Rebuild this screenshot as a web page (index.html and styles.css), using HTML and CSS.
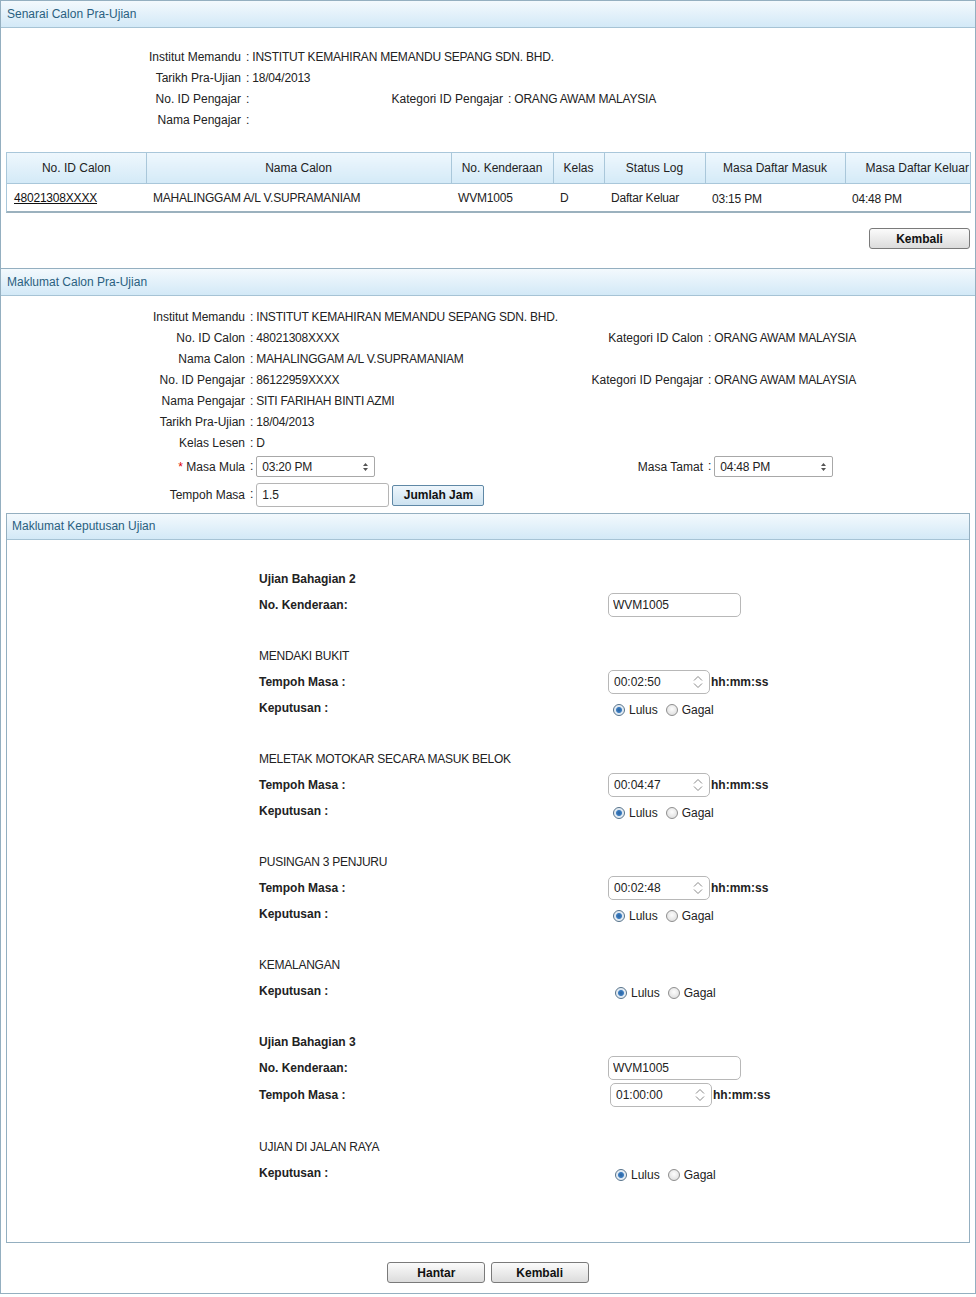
FILE: index.html
```html
<!DOCTYPE html>
<html lang="ms">
<head>
  <meta charset="UTF-8">
  <title>Senarai Calon Pra-Ujian</title>
  <link rel="stylesheet" href="styles.css">
</head>
<body>
  <div class="panel">
    <div class="panel-head">Senarai Calon Pra-Ujian</div>
    <div class="panel-body list-body">
      <div class="info info-top">
        <div class="lbl">Institut Memandu</div>
        <div class="val span3">: INSTITUT KEMAHIRAN MEMANDU SEPANG SDN. BHD.</div>
        <div class="lbl">Tarikh Pra-Ujian</div>
        <div class="val span3">: 18/04/2013</div>
        <div class="lbl">No. ID Pengajar</div>
        <div class="val">:</div>
        <div class="lbl">Kategori ID Pengajar</div>
        <div class="val">: ORANG AWAM MALAYSIA</div>
        <div class="lbl">Nama Pengajar</div>
        <div class="val span3">:</div>
      </div>

      <div class="table-wrap">
        <table class="list">
          <colgroup>
            <col class="w-id"><col class="w-nama"><col class="w-kend"><col class="w-kelas">
            <col class="w-status"><col class="w-masuk"><col class="w-keluar">
          </colgroup>
          <tr>
            <th>No. ID Calon</th>
            <th>Nama Calon</th>
            <th>No. Kenderaan</th>
            <th>Kelas</th>
            <th>Status Log</th>
            <th>Masa Daftar Masuk</th>
            <th>Masa Daftar Keluar</th>
          </tr>
          <tr>
            <td><a href="#">48021308XXXX</a></td>
            <td>MAHALINGGAM A/L V.SUPRAMANIAM</td>
            <td>WVM1005</td>
            <td>D</td>
            <td>Daftar Keluar</td>
            <td class="low">03:15 PM</td>
            <td class="low">04:48 PM</td>
          </tr>
        </table>
      </div>

      <div class="actions right">
        <button class="btn">Kembali</button>
      </div>
    </div>
  </div>

  <div class="panel">
    <div class="panel-head">Maklumat Calon Pra-Ujian</div>
    <div class="panel-body main-body">
      <div class="info info-main">
        <div class="lbl">Institut Memandu</div>
        <div class="val span3">: INSTITUT KEMAHIRAN MEMANDU SEPANG SDN. BHD.</div>

        <div class="lbl">No. ID Calon</div>
        <div class="val">: 48021308XXXX</div>
        <div class="lbl">Kategori ID Calon</div>
        <div class="val">: ORANG AWAM MALAYSIA</div>

        <div class="lbl">Nama Calon</div>
        <div class="val span3">: MAHALINGGAM A/L V.SUPRAMANIAM</div>

        <div class="lbl">No. ID Pengajar</div>
        <div class="val">: 86122959XXXX</div>
        <div class="lbl">Kategori ID Pengajar</div>
        <div class="val">: ORANG AWAM MALAYSIA</div>

        <div class="lbl">Nama Pengajar</div>
        <div class="val span3">: SITI FARIHAH BINTI AZMI</div>

        <div class="lbl">Tarikh Pra-Ujian</div>
        <div class="val span3">: 18/04/2013</div>

        <div class="lbl">Kelas Lesen</div>
        <div class="val span3">: D</div>

        <div class="lbl"><span class="req">*</span> Masa Mula</div>
        <div class="val">: <span class="select">03:20 PM
          <svg width="7" height="10" viewBox="0 0 7 10"><path d="M1 4 L3.5 1 L6 4 Z M1 6 L3.5 9 L6 6 Z" fill="#555"/></svg></span></div>
        <div class="lbl">Masa Tamat</div>
        <div class="val">: <span class="select">04:48 PM
          <svg width="7" height="10" viewBox="0 0 7 10"><path d="M1 4 L3.5 1 L6 4 Z M1 6 L3.5 9 L6 6 Z" fill="#555"/></svg></span></div>

        <div class="lbl">Tempoh Masa</div>
        <div class="val span3">: <input class="field" value="1.5"> <button class="btn-blue">Jumlah Jam</button></div>
      </div>

      <div class="subpanel">
        <div class="subpanel-head">Maklumat Keputusan Ujian</div>
        <div class="subpanel-body">

          <div class="group">
            <div class="row"><b>Ujian Bahagian 2</b></div>
            <div class="row"><b>No. Kenderaan:</b><input class="text-box" value="WVM1005"></div>
          </div>

          <div class="group">
            <div class="row caps">MENDAKI BUKIT</div>
            <div class="row">
              <b>Tempoh Masa :</b>
              <div class="time"><span class="time-box">00:02:50
                <svg width="12" height="14" viewBox="0 0 12 14"><path d="M2 5.5 L6 1.5 L10 5.5 M2 8.5 L6 12.5 L10 8.5" fill="none" stroke="#8a8a8a" stroke-width="1"/></svg></span><b>hh:mm:ss</b></div>
            </div>
            <div class="row">
              <b>Keputusan :</b>
              <div class="choice"><span class="radio on"></span>Lulus<span class="radio"></span>Gagal</div>
            </div>
          </div>

          <div class="group">
            <div class="row caps">MELETAK MOTOKAR SECARA MASUK BELOK</div>
            <div class="row">
              <b>Tempoh Masa :</b>
              <div class="time"><span class="time-box">00:04:47
                <svg width="12" height="14" viewBox="0 0 12 14"><path d="M2 5.5 L6 1.5 L10 5.5 M2 8.5 L6 12.5 L10 8.5" fill="none" stroke="#8a8a8a" stroke-width="1"/></svg></span><b>hh:mm:ss</b></div>
            </div>
            <div class="row">
              <b>Keputusan :</b>
              <div class="choice"><span class="radio on"></span>Lulus<span class="radio"></span>Gagal</div>
            </div>
          </div>

          <div class="group">
            <div class="row caps">PUSINGAN 3 PENJURU</div>
            <div class="row">
              <b>Tempoh Masa :</b>
              <div class="time"><span class="time-box">00:02:48
                <svg width="12" height="14" viewBox="0 0 12 14"><path d="M2 5.5 L6 1.5 L10 5.5 M2 8.5 L6 12.5 L10 8.5" fill="none" stroke="#8a8a8a" stroke-width="1"/></svg></span><b>hh:mm:ss</b></div>
            </div>
            <div class="row">
              <b>Keputusan :</b>
              <div class="choice"><span class="radio on"></span>Lulus<span class="radio"></span>Gagal</div>
            </div>
          </div>

          <div class="group">
            <div class="row caps">KEMALANGAN</div>
            <div class="row">
              <b>Keputusan :</b>
              <div class="choice shift"><span class="radio on"></span>Lulus<span class="radio"></span>Gagal</div>
            </div>
          </div>

          <div class="group">
            <div class="row"><b>Ujian Bahagian 3</b></div>
            <div class="row"><b>No. Kenderaan:</b><input class="text-box" value="WVM1005"></div>
            <div class="row tall">
              <b>Tempoh Masa :</b>
              <div class="time shift"><span class="time-box">01:00:00
                <svg width="12" height="14" viewBox="0 0 12 14"><path d="M2 5.5 L6 1.5 L10 5.5 M2 8.5 L6 12.5 L10 8.5" fill="none" stroke="#8a8a8a" stroke-width="1"/></svg></span><b>hh:mm:ss</b></div>
            </div>
          </div>

          <div class="group">
            <div class="row caps">UJIAN DI JALAN RAYA</div>
            <div class="row">
              <b>Keputusan :</b>
              <div class="choice shift"><span class="radio on"></span>Lulus<span class="radio"></span>Gagal</div>
            </div>
          </div>

        </div>
      </div>

      <div class="actions center">
        <button class="btn small">Hantar</button>
        <button class="btn small">Kembali</button>
      </div>
    </div>
  </div>
</body>
</html>
```

FILE: styles.css
```css
body {
  margin: 0;
  font-family: "Liberation Sans", Arial, sans-serif;
  font-size: 12px;
  color: #222;
  background-color: #fff;
}

.panel {
  border: 1px solid #94afc0;
}

.panel + .panel {
  border-top: 0;
}

.panel-head {
  height: 26px;
  line-height: 26px;
  padding-left: 6px;
  color: #2a5f80;
  background: linear-gradient(#f3f9fd, #d3e9f7);
  border-bottom: 1px solid #a6c3d5;
}

.list-body {
  padding: 18px 0 19px;
}

.main-body {
  padding: 10px 0 10px;
}

/* label : value grids */
.info {
  display: grid;
  align-items: center;
}

.info-top {
  grid-template-columns: 240px 146px 116px auto;
  grid-auto-rows: 21px;
}

.info-main {
  grid-template-columns: 244px 300px 158px auto;
  grid-template-rows: repeat(7, 21px) 27px 30px;
}

.lbl {
  text-align: right;
  white-space: nowrap;
}

.val {
  padding-left: 5px;
  white-space: nowrap;
  letter-spacing: -0.2px;
}

.span3 {
  grid-column: span 3;
}

.req {
  color: #d00;
}

/* candidate table */
.table-wrap {
  margin: 22px 4px 0 5px;
  overflow: hidden;
  border: 1px solid #a9c7da;
  border-bottom: 2px solid #9bb1be;
}

.list {
  border-collapse: collapse;
  table-layout: fixed;
  width: 982px;
}

.w-id { width: 139px; }
.w-nama { width: 305px; }
.w-kend { width: 102px; }
.w-kelas { width: 51px; }
.w-status { width: 101px; }
.w-masuk { width: 140px; }
.w-keluar { width: 144px; }

.list th {
  height: 30px;
  padding: 0;
  font-weight: normal;
  white-space: nowrap;
  background: linear-gradient(#eef7fd, #d4eaf7);
  border-left: 1px solid #a9c7da;
  border-bottom: 1px solid #a9c7da;
}

.list th:first-child {
  border-left: 0;
}

.list td {
  height: 27px;
  padding: 0 7px;
  white-space: nowrap;
  letter-spacing: -0.2px;
}

.list td.low {
  height: 24px;
  padding-top: 3px;
}

.list a {
  color: #111;
}

/* buttons */
.actions.right {
  margin-top: 15px;
  padding-right: 5px;
  text-align: right;
}

.actions.center {
  margin-top: 19px;
  text-align: center;
}

.btn {
  width: 101px;
  height: 21px;
  padding: 0;
  vertical-align: top;
  font-family: "Liberation Sans", Arial, sans-serif;
  font-size: 12px;
  font-weight: bold;
  color: #111;
  border: 1px solid #7a7a7a;
  border-radius: 3px;
  background: linear-gradient(#fbfbfb, #dcdcdc);
}

.btn.small {
  width: 98px;
  margin: 0 1px;
}

.btn-blue {
  width: 92px;
  height: 21px;
  padding: 0;
  vertical-align: middle;
  font-family: "Liberation Sans", Arial, sans-serif;
  font-size: 12px;
  font-weight: bold;
  color: #111;
  border: 1px solid #5f88a6;
  border-radius: 2px;
  background: linear-gradient(#eef6fc, #cde2f0);
}

/* form controls */
.select {
  display: inline-flex;
  align-items: center;
  justify-content: space-between;
  box-sizing: border-box;
  width: 119px;
  height: 21px;
  padding: 0 5px 0 5px;
  vertical-align: middle;
  border: 1px solid #a8a8a8;
  border-radius: 2px;
  background: #fff;
}

.field {
  box-sizing: border-box;
  width: 133px;
  height: 24px;
  padding: 0 5px;
  vertical-align: middle;
  font-family: "Liberation Sans", Arial, sans-serif;
  font-size: 12px;
  color: #222;
  border: 1px solid #b5b5b5;
  border-radius: 3px;
}

.subpanel {
  margin: 3px 5px 0;
  border: 1px solid #94afc0;
}

.subpanel-head {
  height: 25px;
  line-height: 25px;
  padding-left: 5px;
  color: #2a5f80;
  background: linear-gradient(#f3f9fd, #d3e9f7);
  border-bottom: 1px solid #a6c3d5;
}

.subpanel-body {
  padding: 26px 0 56px 252px;
}

.group + .group {
  margin-top: 25px;
}

.row {
  display: grid;
  grid-template-columns: 349px auto;
  align-items: center;
  height: 26px;
}

.row.caps {
  letter-spacing: -0.25px;
}

.row.tall {
  height: 28px;
}

.text-box {
  box-sizing: border-box;
  width: 133px;
  height: 24px;
  padding: 0 4px;
  font-family: "Liberation Sans", Arial, sans-serif;
  font-size: 12px;
  color: #222;
  border: 1px solid #b8b8b8;
  border-radius: 5px;
}

.time {
  display: flex;
  align-items: center;
}

.time-box {
  display: inline-flex;
  align-items: center;
  justify-content: space-between;
  box-sizing: border-box;
  width: 102px;
  height: 24px;
  padding: 0 5px 0 5px;
  margin-right: 1px;
  border: 1px solid #b8b8b8;
  border-radius: 5px;
}

.shift {
  margin-left: 2px;
}

.choice {
  display: flex;
  align-items: center;
  padding-top: 3px;
}

.radio {
  box-sizing: border-box;
  width: 12px;
  height: 12px;
  margin: 0 4px 0 8px;
  border: 1px solid #8e8e8e;
  border-radius: 50%;
  background: radial-gradient(circle at 50% 40%, #fdfdfd, #d8d8d8);
}

.choice .radio:first-child {
  margin-left: 5px;
}

.radio.on {
  border-color: #56728a;
  background: radial-gradient(circle, #2b64a0 0, #3b7cc0 2.5px, #dce7f1 3.5px, #f4f8fb 6px);
}
```
